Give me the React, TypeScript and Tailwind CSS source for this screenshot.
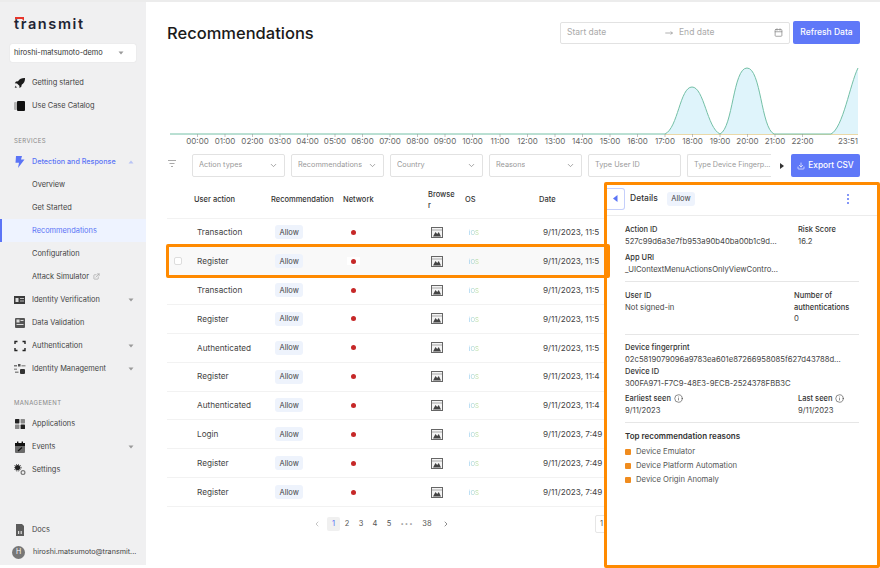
import React from 'react';
import { ChevronDown, ChevronLeft, ChevronRight, Calendar, Download, ExternalLink, Info, MoveRight } from 'lucide-react';

const font = { fontFamily: 'Inter, "Noto Sans", sans-serif' };

const Caret = ({ up }: { up?: boolean }) => (
  <svg width="6" height="4" viewBox="0 0 6 4" className="ml-auto mr-[12px]">
    <path d={up ? 'M3 0.5 L5.5 3.5 H0.5 Z' : 'M0.5 0.5 H5.5 L3 3.5 Z'} fill={up ? '#b9c4f5' : '#9a9a9a'} />
  </svg>
);

const icons: Record<string, React.ReactNode> = {
  rocket: (
    <svg width="12" height="12" viewBox="0 0 12 12">
      <path d="M11 1 C8 .8 5.6 2 4 4.2 L2 4.6 L.8 6.3 L3 6.4 L5.4 8.8 L5.5 11 L7.3 9.8 L7.7 7.8 C10 6.2 11.2 4 11 1Z" fill="#1b1b1b" />
      <path d="M1.2 8.6 L3.2 10.6 L.8 11Z" fill="#555" />
    </svg>
  ),
  catalog: (
    <svg width="12" height="12" viewBox="0 0 12 12">
      <rect x="0" y="2" width="3" height="8" rx="1" fill="#b5b5b5" />
      <rect x="3" y="1" width="8" height="10" rx="1" fill="#111" />
    </svg>
  ),
  bolt: (
    <svg width="12" height="12" viewBox="0 0 12 12">
      <path d="M2 0 H8 L7 3.6 H10.5 L4 12 L5 6.8 H1.5 Z" fill="#5b74f6" />
    </svg>
  ),
  id: (
    <svg width="12" height="12" viewBox="0 0 12 12">
      <rect x="0" y="2" width="11" height="8" fill="#3b3b3b" />
      <rect x="1.5" y="4" width="3" height="4" fill="#ddd" />
      <rect x="6" y="4" width="4" height="1" fill="#bbb" />
      <rect x="6" y="6.5" width="4" height="1" fill="#bbb" />
    </svg>
  ),
  data: (
    <svg width="12" height="12" viewBox="0 0 12 12">
      <rect x="1" y="1" width="10" height="10" rx="1" fill="#555" />
      <rect x="2.5" y="2.5" width="3" height="3" fill="#ddd" />
      <rect x="6.5" y="3" width="3" height="1" fill="#ddd" />
      <rect x="2.5" y="7" width="7" height="1" fill="#ddd" />
    </svg>
  ),
  auth: (
    <svg width="12" height="12" viewBox="0 0 12 12" fill="none" stroke="#222" strokeWidth="1.4">
      <path d="M1 4 V1.5 H3.5 M8.5 1.5 H11 V4 M11 8 V10.5 H8.5 M3.5 10.5 H1 V8" />
    </svg>
  ),
  manage: (
    <svg width="12" height="12" viewBox="0 0 12 12">
      <rect x="0" y="2" width="3" height="1.5" fill="#777" />
      <rect x="0" y="5.5" width="3" height="1.5" fill="#999" />
      <rect x="4" y="1" width="2.5" height="2.5" fill="#555" />
      <rect x="7.5" y="2" width="4" height="1.5" fill="#999" />
      <rect x="1" y="8.5" width="3.5" height="1.5" fill="#888" />
      <rect x="6" y="6" width="5" height="5" rx="1" fill="#333" />
    </svg>
  ),
  apps: (
    <svg width="12" height="12" viewBox="0 0 12 12">
      <rect x="1" y="1" width="4.4" height="4.4" rx=".6" fill="#222" />
      <rect x="6.6" y="1" width="4.4" height="4.4" rx=".6" fill="#888" />
      <rect x="1" y="6.6" width="4.4" height="4.4" rx=".6" fill="#888" />
      <rect x="6.6" y="6.6" width="4.4" height="4.4" rx=".6" fill="#222" />
    </svg>
  ),
  events: (
    <svg width="12" height="12" viewBox="0 0 12 12">
      <rect x="1" y="2" width="10" height="10" rx="1" fill="#6a6a6a" />
      <rect x="1" y="2" width="10" height="3" fill="#111" />
      <rect x="3" y=".5" width="1.4" height="2.5" fill="#111" />
      <rect x="7.6" y=".5" width="1.4" height="2.5" fill="#111" />
      <path d="M4 10 L8 6.5" stroke="#111" strokeWidth="1.2" />
    </svg>
  ),
  settings: (
    <svg width="12" height="12" viewBox="0 0 12 12">
      <circle cx="3.6" cy="3.6" r="2.6" fill="#222" />
      <circle cx="3.6" cy="3.6" r="3.4" fill="none" stroke="#222" strokeWidth="1" strokeDasharray="1 1" />
      <circle cx="9" cy="8.6" r="1.9" fill="none" stroke="#777" strokeWidth="1.2" />
    </svg>
  ),
  docs: (
    <svg width="12" height="12" viewBox="0 0 12 12">
      <path d="M2 0 H8 L10 2 V12 H2 Z" fill="#5c5c5c" />
      <rect x="4" y="7" width="1.2" height="3" fill="#ddd" />
      <rect x="6.6" y="7" width="1.2" height="3" fill="#ddd" />
    </svg>
  ),
};

const NavItem = ({ icon, label, caret }: { icon: string; label: string; caret?: boolean }) => (
  <div className="flex h-[23px] items-center pl-[14px] text-[7.4px] text-[#444]">
    <span className="mr-[6px] flex w-[12px] justify-center">{icons[icon]}</span>
    {label}
    {caret && <Caret />}
  </div>
);

const SubItem = ({ label, active, ext }: { label: string; active?: boolean; ext?: boolean }) => (
  <div
    className={`flex h-[23px] items-center text-[7.4px] ${
      active ? 'border-l-2 border-[#5b74f6] bg-[#eef3ff] pl-[30px] text-[#5b74f6]' : 'pl-[32px] text-[#444]'
    }`}
  >
    {label}
    {ext && <ExternalLink size={7} className="ml-[4px] text-[#999]" />}
  </div>
);

const Sidebar = () => (
  <aside className="flex h-[563px] w-[146px] shrink-0 flex-col bg-[#f0f0f1]">
    <div className="relative mt-[12px] ml-[14px] h-[20px] text-[14.5px] leading-[20px] font-semibold tracking-[1.6px] text-[#1d2433]">
      <svg width="9" height="4" viewBox="0 0 9 4" className="absolute top-[3px] left-[1px]">
        <path d="M0 0 H9 V4 L7 2 H0 Z" fill="#e8352b" />
      </svg>
      transmit
    </div>
    <div className="mx-[10px] mt-[10px] flex h-[18px] items-center rounded-[2px] bg-white pl-[4px] text-[7.4px] text-[#333] shadow-[0_0_1px_#ccc]">
      hiroshi-matsumoto-demo
      <Caret />
    </div>
    <div className="mt-[9px]">
      <NavItem icon="rocket" label="Getting started" />
      <NavItem icon="catalog" label="Use Case Catalog" />
    </div>
    <div className="mt-[17px] mb-[3px] pl-[14px] text-[6px] leading-[14px] tracking-[0.4px] text-[#888]">SERVICES</div>
    <div className="flex h-[22px] items-center pl-[14px] text-[7.2px] font-medium text-[#5b74f6]">
      <span className="mr-[6px] flex w-[12px] justify-center">{icons.bolt}</span>
      Detection and Response
      <Caret up />
    </div>
    <SubItem label="Overview" />
    <SubItem label="Get Started" />
    <SubItem label="Recommendations" active />
    <SubItem label="Configuration" />
    <SubItem label="Attack Simulator" ext />
    <NavItem icon="id" label="Identity Verification" caret />
    <NavItem icon="data" label="Data Validation" />
    <NavItem icon="auth" label="Authentication" caret />
    <NavItem icon="manage" label="Identity Management" caret />
    <div className="mt-[16px] mb-[2px] pl-[14px] text-[6px] leading-[14px] tracking-[0.4px] text-[#888]">MANAGEMENT</div>
    <NavItem icon="apps" label="Applications" />
    <NavItem icon="events" label="Events" caret />
    <NavItem icon="settings" label="Settings" />
    <div className="mt-auto">
      <NavItem icon="docs" label="Docs" />
      <div className="flex h-[23px] items-center pl-[12px] text-[7.2px] text-[#444]">
        <span className="mr-[8px] flex h-[13px] w-[13px] items-center justify-center rounded-full bg-[#777] text-[7px] text-white">H</span>
        hiroshi.matsumoto@transmit...
      </div>
      <div className="h-[1px]" />
    </div>
  </aside>
);

const hours = ['00:00', '01:00', '02:00', '03:00', '04:00', '05:00', '06:00', '07:00', '08:00', '09:00', '10:00', '11:00', '12:00', '13:00', '14:00', '15:00', '16:00', '17:00', '18:00', '19:00', '20:00', '21:00', '22:00'];

const Chart = () => (
  <svg width="700" height="92" viewBox="170 56 700 92" className="block" style={font}>
    <path d="M665 134 C678 128 680 87 692 87 C704 87 707 128 720 134 C733 128 733 68 747 68 C761 68 761 128 774 134 Z" fill="#dff4fb" />
    <path d="M831 134 C843 128 850 84 858 68 V134 Z" fill="#dff4fb" />
    <path d="M665 134.5 H858" stroke="#ead9a8" strokeWidth="1" />
    <path d="M170 134 H665 C678 128 680 87 692 87 C704 87 707 128 720 134 C733 128 733 68 747 68 C761 68 761 128 774 134 H831 C843 128 850 84 858 68" fill="none" stroke="#74c0a6" strokeWidth="1" />
    {hours.map((h, i) => (
      <g key={h}>
        <path d={`M${197.5 + i * 27.5} 134 V137`} stroke="#999" strokeWidth="0.6" />
        <text x={197.5 + i * 27.5} y="144" textAnchor="middle" fontSize="8" fill="#666">{h}</text>
      </g>
    ))}
    <text x="848" y="144" textAnchor="middle" fontSize="8" fill="#666">23:51</text>
  </svg>
);

const FilterSelect = ({ label }: { label: string }) => (
  <div className="flex h-[23px] w-[93px] items-center justify-between rounded-[2px] border border-[#e2e2e2] pr-[6px] pl-[6px] text-[7.3px] text-[#999]">
    <span className="truncate">{label}</span>
    <ChevronDown size={9} className="shrink-0 text-[#888]" />
  </div>
);

const rows = [
  ['Transaction', '9/11/2023, 11:5'],
  ['Register', '9/11/2023, 11:5'],
  ['Transaction', '9/11/2023, 11:5'],
  ['Register', '9/11/2023, 11:5'],
  ['Authenticated', '9/11/2023, 11:5'],
  ['Register', '9/11/2023, 11:4'],
  ['Authenticated', '9/11/2023, 11:4'],
  ['Login', '9/11/2023, 7:49'],
  ['Register', '9/11/2023, 7:49'],
  ['Register', '9/11/2023, 7:49'],
];

const gridCols = 'grid grid-cols-[27px_77px_72px_85px_37px_74px_1fr] items-center';

const BrokenImage = () => (
  <svg width="12" height="11" viewBox="0 0 12 11" fill="none">
    <rect x=".5" y=".5" width="11" height="10" fill="#f4f4f4" stroke="#666" strokeWidth="1" />
    <path d="M1 3 H11" stroke="#aaa" strokeWidth="1" />
    <path d="M2 9.5 L4.5 5 L6.2 7 L7.8 5 L10 9.5 Z" fill="#444" />
  </svg>
);

const Pill = () => (
  <span className="block w-fit rounded-[3px] bg-[#eef3fc] px-[4.5px] py-[2.5px] text-[7.5px] leading-[9px] text-[#444]">Allow</span>
);

const Table = () => (
  <div className="mt-[5px] overflow-hidden">
    <div className={`${gridCols} h-[36.5px] border-b border-[#f2f2f2] text-[7.5px] font-medium text-[#333]`}>
      <span />
      <span>User action</span>
      <span>Recommendation</span>
      <span>Network</span>
      <span className="w-[27.5px] leading-[11px] break-all">Browser</span>
      <span>OS</span>
      <span>Date</span>
    </div>
    {rows.map(([action, date], i) => (
      <div
        key={i}
        className={`${gridCols} h-[28.85px] border-b border-[#f2f2f2] text-[8.2px] text-[#444] ${i === 1 ? 'bg-[#f9f9f9]' : ''}`}
      >
        <span className="pl-[7px]">
          {i === 1 && <span className="block h-[8px] w-[8px] rounded-[2px] border border-[#ddd] bg-white" />}
        </span>
        <span className="pl-[3px]">{action}</span>
        <span className="pl-[4px]"><Pill /></span>
        <span className="pl-[4px]">
          <span className={`flex h-[8px] w-[13px] items-center justify-center ${i === 1 ? 'bg-white' : ''}`}>
            <span className="block h-[5px] w-[5px] rounded-full bg-[#c62828]" />
          </span>
        </span>
        <span className="pl-[3px]"><BrokenImage /></span>
        <span className="pl-[4px]">
          <span className="bg-gradient-to-r from-[#7fbfee] to-[#c4e08a] bg-clip-text text-[6px] text-transparent">iOS</span>
        </span>
        <span className="pl-[4px] whitespace-nowrap">{date}</span>
      </div>
    ))}
  </div>
);

const Pagination = () => (
  <div className="mt-[10px] flex h-[14px] items-center pl-[146px] text-[7.5px] text-[#555]">
    <ChevronLeft size={8} className="mr-[6px] text-[#aaa]" />
    <span className="flex h-[14px] w-[13px] items-center justify-center rounded-[2px] bg-[#f0f0f0] text-[#5b74f6]">1</span>
    {['2', '3', '4', '5'].map((p) => (
      <span key={p} className="flex h-[14px] w-[14px] items-center justify-center">{p}</span>
    ))}
    <span className="w-[22px] text-center text-[6px] tracking-[1px] text-[#999]">•••</span>
    <span className="ml-[1px] w-[16px] text-center">38</span>
    <ChevronRight size={8} className="ml-[7px]" />
    <span className="ml-[145px] flex h-[18px] w-[30px] shrink-0 items-center rounded-[2px] border border-[#e6e6e6] pl-[4px]">1</span>
  </div>
);

const Field = ({ label, children, className = '', info }: { label: string; children: React.ReactNode; className?: string; info?: boolean }) => (
  <div className={className}>
    <div className="flex items-center gap-[3px] text-[7.5px] leading-[12px] font-medium text-[#333]">
      {label}
      {info && <Info size={9} strokeWidth={1.5} className="text-[#333]" />}
    </div>
    <div className="text-[7.7px] leading-[12px] whitespace-nowrap text-[#444]">{children}</div>
  </div>
);

const DetailsPanel = () => (
  <div className="absolute top-[180px] left-[604px] flex h-[386px] w-[276px] flex-col rounded-[2px] border-[3px] border-[#ff8a00] bg-white">
    <div className="flex h-[31px] items-center border-b border-[#ececec] pb-[3px]">
      <span className="flex h-[22px] w-[18px] items-center justify-center rounded-r-[3px] border border-l-0 border-[#c5cffb]">
        <svg width="5" height="7" viewBox="0 0 5 7"><path d="M4.5 0 V7 L0 3.5Z" fill="#5b74f6" /></svg>
      </span>
      <span className="ml-[5px] text-[8.5px] font-medium text-[#333]">Details</span>
      <span className="ml-[9px]"><Pill /></span>
      <span className="mr-[28px] ml-auto flex flex-col gap-[2px]">
        <span className="block h-[2px] w-[2px] rounded-full bg-[#5b74f6]" />
        <span className="block h-[2px] w-[2px] rounded-full bg-[#5b74f6]" />
        <span className="block h-[2px] w-[2px] rounded-full bg-[#5b74f6]" />
      </span>
    </div>
    <div className="px-[18px]">
      <div className="flex pt-[8px]">
        <div className="w-[173px]">
          <Field label="Action ID">527c99d6a3e7fb953a90b40ba00b1c9d...</Field>
          <Field label="App URI" className="mt-[4px]">_UIContextMenuActionsOnlyViewContro...</Field>
        </div>
        <Field label="Risk Score">16.2</Field>
      </div>
      <div className="mt-[5px] flex border-t border-[#e6e6e6] pt-[8px] pb-[9px]">
        <div className="w-[169px]">
          <Field label="User ID">Not signed-in</Field>
        </div>
        <div className="text-[7.5px] leading-[11.5px] font-medium text-[#333]">
          Number of<br />authentications
          <div className="text-[7.7px] font-normal text-[#444]">0</div>
        </div>
      </div>
      <div className="border-t border-[#e6e6e6] pt-[7px]">
        <Field label="Device fingerprint">02c5819079096a9783ea601e87266958085f627d43788d...</Field>
        <Field label="Device ID">300FA971-F7C9-48E3-9ECB-2524378FBB3C</Field>
        <div className="mt-[3px] flex">
          <div className="w-[173px]">
            <Field label="Earliest seen" info>9/11/2023</Field>
          </div>
          <Field label="Last seen" info>9/11/2023</Field>
        </div>
      </div>
      <div className="mt-[5px] border-t border-[#e6e6e6] pt-[7px]">
        <div className="text-[8px] leading-[12px] font-semibold text-[#333]">Top recommendation reasons</div>
        <div className="mt-[4.5px]">
          {['Device Emulator', 'Device Platform Automation', 'Device Origin Anomaly'].map((r) => (
            <div key={r} className="mt-[2px] flex h-[12px] items-center text-[7.7px] text-[#555]">
              <span className="mr-[5px] h-[6px] w-[6px] rounded-[1px] bg-[#f08c1e]" />
              {r}
            </div>
          ))}
        </div>
      </div>
    </div>
  </div>
);

export default function App() {
  return (
    <div className="relative flex h-[568px] w-[880px] overflow-hidden border-t-2 border-[#ececec] bg-white" style={font}>
      <Sidebar />
      <main className="min-w-0 flex-1 pl-[21px]">
        <div className="flex h-[54px] items-center justify-between pr-[20px]">
          <h1 className="mt-[9px] text-[16.5px] font-medium text-[#1a1a1a]">Recommendations</h1>
          <div className="mt-[7px] flex items-center gap-[3px]">
            <div className="flex h-[22px] w-[230px] items-center rounded-[2px] border border-[#e2e2e2] pr-[6px] pl-[6px] text-[8.5px] text-[#aaa]">
              <span className="w-[98px]">Start date</span>
              <MoveRight size={8} className="mr-[6px] text-[#888]" />
              <span>End date</span>
              <Calendar size={9} className="ml-auto text-[#888]" />
            </div>
            <button className="h-[23px] w-[67px] rounded-[2px] bg-[#5f78f8] text-[8.5px] font-medium text-white">Refresh Data</button>
          </div>
        </div>
        <div className="ml-[3px]"><Chart /></div>
        <div className="mt-[6px] flex items-center">
          <svg width="10" height="7" viewBox="0 0 10 7" className="mr-[15px] -translate-y-[2px]" stroke="#aaa"><path d="M1 .5H9M2.5 3.5H7.5M4 6.5H6" /></svg>
          <div className="flex gap-[6px]">
            <FilterSelect label="Action types" />
            <FilterSelect label="Recommendations" />
            <FilterSelect label="Country" />
            <FilterSelect label="Reasons" />
            <div className="flex h-[23px] w-[93px] items-center rounded-[2px] border border-[#e2e2e2] pl-[6px] text-[7.3px] text-[#999]">Type User ID</div>
            <div className="flex h-[23px] w-[84px] items-center overflow-hidden rounded-l-[2px] border border-r-0 border-[#e2e2e2] pl-[6px] text-[7.2px] whitespace-nowrap text-[#999]">Type Device Fingerp...</div>
          </div>
          <svg width="4" height="6" viewBox="0 0 4 6" className="mr-[7px] ml-[9px]"><path d="M0 0 L4 3 L0 6Z" fill="#333" /></svg>
          <button className="flex h-[23px] w-[69px] shrink-0 items-center justify-center gap-[3px] rounded-[2px] bg-[#5f78f8] text-[8.3px] font-medium text-white">
            <Download size={8} /> Export CSV
          </button>
        </div>
        <Table />
        <Pagination />
      </main>
      <DetailsPanel />
      <div className="pointer-events-none absolute top-[242px] left-[166px] h-[34px] w-[444px] rounded-[2px] border-[3px] border-[#ff8a00]" />
    </div>
  );
}
